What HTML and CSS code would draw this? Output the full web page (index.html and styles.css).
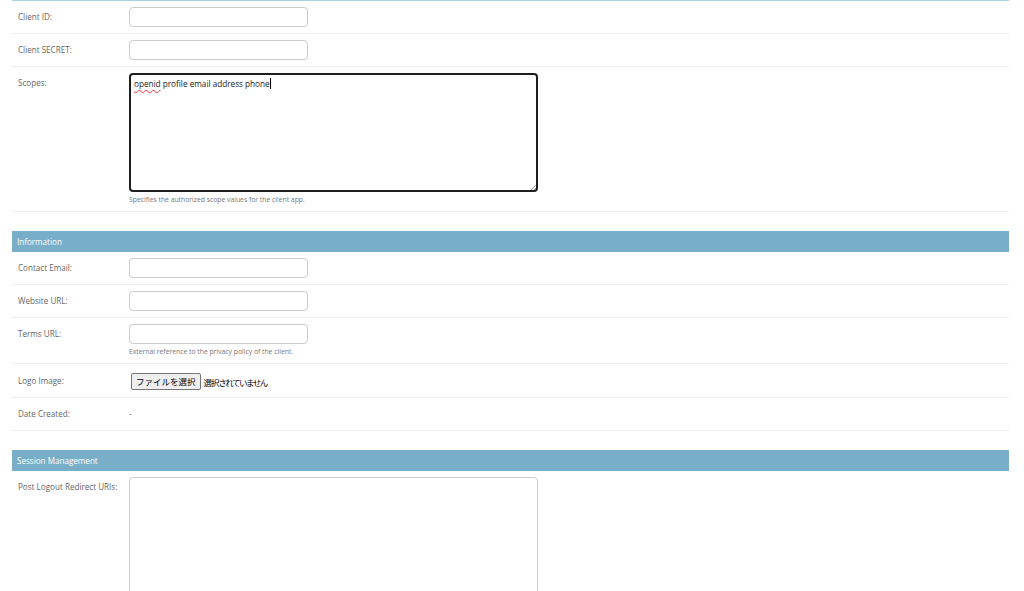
FILE: index.html
```html
<!DOCTYPE html>
<html>
<head>
<meta charset="utf-8">
<link rel="stylesheet" href="styles.css">
</head>
<body>
<div class="content">
  <fieldset class="module first">
    <div class="row">
      <div class="label">Client ID:</div>
      <div class="field"><div class="input"></div></div>
    </div>
    <div class="row">
      <div class="label">Client SECRET:</div>
      <div class="field"><div class="input"></div></div>
    </div>
    <div class="row">
      <div class="label">Scopes:</div>
      <div class="field">
        <div class="textarea focused"><span class="typo">openid</span> profile email address phone<span class="caret"></span></div>
        <div class="help">Specifies the authorized scope values for the client app.</div>
      </div>
    </div>
  </fieldset>

  <fieldset class="module">
    <h2 class="caption">Information</h2>
    <div class="row">
      <div class="label">Contact Email:</div>
      <div class="field"><div class="input"></div></div>
    </div>
    <div class="row">
      <div class="label">Website URL:</div>
      <div class="field"><div class="input"></div></div>
    </div>
    <div class="row">
      <div class="label">Terms URL:</div>
      <div class="field">
        <div class="input"></div>
        <div class="help">External reference to the privacy policy of the client.</div>
      </div>
    </div>
    <div class="row file-row">
      <div class="label">Logo Image:</div>
      <div class="field file">
        <span class="file-btn">ファイルを選択</span><span class="file-none">選択されていません</span>
      </div>
    </div>
    <div class="row">
      <div class="label">Date Created:</div>
      <div class="field readonly">-</div>
    </div>
  </fieldset>

  <fieldset class="module">
    <h2 class="caption">Session Management</h2>
    <div class="row">
      <div class="label">Post Logout Redirect URIs:</div>
      <div class="field"><div class="textarea plain"></div></div>
    </div>
  </fieldset>
</div>
</body>
</html>
```

FILE: styles.css
```css
html, body {
  margin: 0;
  padding: 0;
  background: #fff;
  overflow: hidden;
}
body {
  font-family: "Open Sans", "Noto Sans", "Noto Sans CJK JP", sans-serif;
  font-size: 8.1px;
  color: #333;
}
.content {
  padding: 0 15px 0 12px;
}
.module {
  margin: 0 0 19px 0;
  padding: 0;
  border: none;
  min-width: 0;
}
.module.first {
  border-top: 1px solid #a8d0e3;
}
.caption {
  margin: 0;
  padding: 0 5px;
  height: 21px;
  line-height: 21px;
  background: #79aec8;
  color: #fff;
  font-size: 8.1px;
  font-weight: normal;
}
.row {
  display: flex;
  padding: 6px 6px 6.2px 6px;
  border-bottom: 1px solid #eee;
}
.label {
  width: 111px;
  flex: none;
  color: #666;
  padding-top: 4px;
  line-height: 12px;
}
.field {
  flex: 1;
}
.input {
  width: 177px;
  height: 18px;
  border: 1px solid #ccc;
  border-radius: 4px;
}
.textarea {
  position: relative;
  border-radius: 4px;
  box-sizing: border-box;
  width: 409px;
}
.textarea.focused {
  border: 2px solid #1e1e1e;
  height: 119px;
  padding: 2px 3px;
  color: #222;
  font-size: 8.2px;
  line-height: 14px;
}
.textarea.focused::after {
  content: "";
  position: absolute;
  right: 0;
  bottom: 0;
  width: 5px;
  height: 5px;
  background: linear-gradient(135deg, transparent 50%, #999 50%, #999 60%, transparent 60%, transparent 75%, #999 75%, #999 85%, transparent 85%);
}
.textarea.plain {
  border: 1px solid #ccc;
  height: 140px;
}
.typo {
  text-decoration: underline wavy #e33;
  text-decoration-thickness: 1px;
  text-underline-offset: 2px;
}
.caret {
  display: inline-block;
  width: 1px;
  height: 11px;
  background: #000;
  vertical-align: -2px;
}
.help {
  font-size: 6.8px;
  color: #777;
  margin-top: 2.5px;
  line-height: 10px;
}
.file-row {
  padding-top: 9px;
  padding-bottom: 6.5px;
}
.file-row .label {
  padding-top: 2px;
}
.file {
  display: flex;
  align-items: center;
  padding-left: 2px;
}
.file-btn {
  display: inline-block;
  box-sizing: border-box;
  height: 17px;
  line-height: 15px;
  padding: 0 4px;
  border: 1px solid #767676;
  border-radius: 2px;
  background: #efefef;
  color: #000;
  font-size: 8.5px;
  font-family: "Noto Sans CJK JP", sans-serif;
}
.file-none {
  margin-left: 3px;
  color: #000;
  font-size: 8.5px;
  letter-spacing: -1px;
  font-family: "Noto Sans CJK JP", sans-serif;
  font-feature-settings: "palt";
}
.readonly {
  padding-top: 4px;
  line-height: 12px;
  height: 16px;
  color: #666;
}
```
